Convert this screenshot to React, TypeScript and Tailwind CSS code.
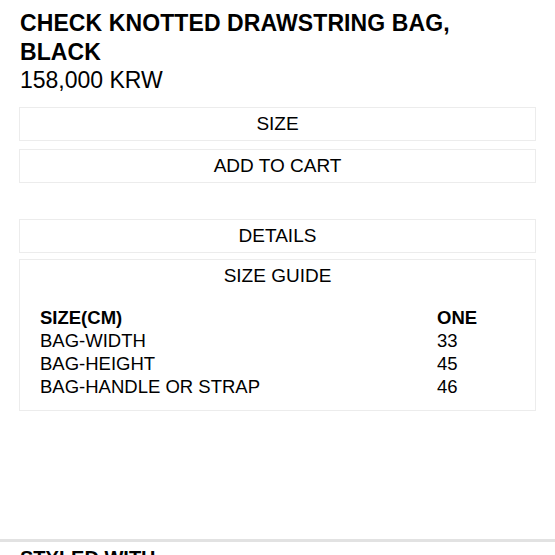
export default function App() {
  const rows = [
    { label: "BAG-WIDTH", value: "33" },
    { label: "BAG-HEIGHT", value: "45" },
    { label: "BAG-HANDLE OR STRAP", value: "46" },
  ];

  return (
    <div className="w-[555px] h-[555px] overflow-hidden bg-white text-black font-['Liberation_Sans',Arial,sans-serif]">
      {/* Title + price */}
      <div className="px-[20px] pt-[9px]">
        <h1 className="text-[23px] font-bold leading-[29px] tracking-[0.1px]">
          CHECK KNOTTED DRAWSTRING BAG,
          <br />
          BLACK
        </h1>
        <p className="text-[23px] leading-[27px]">158,000 KRW</p>
      </div>

      {/* Buttons */}
      <div className="mx-[19px] mt-[13px] flex flex-col gap-[8px]">
        <button className="h-[34px] border border-[#ececec] text-[19px] flex items-center justify-center">
          SIZE
        </button>
        <button className="h-[34px] border border-[#ececec] text-[19px] flex items-center justify-center">
          ADD TO CART
        </button>
      </div>

      {/* Details / size guide */}
      <div className="mx-[19px] mt-[36px] flex flex-col gap-[6px]">
        <div className="h-[34px] border border-[#ececec] text-[19px] flex items-center justify-center">
          DETAILS
        </div>
        <div className="border border-[#ececec]">
          <div className="h-[33px] text-[19px] flex items-center justify-center">
            SIZE GUIDE
          </div>
          <div className="pl-[20px] pt-[13px] pb-[12px] text-[18.5px] leading-[23px]">
            <div className="flex font-bold">
              <span className="flex-1">SIZE(CM)</span>
              <span className="w-[98px]">ONE</span>
            </div>
            {rows.map((r) => (
              <div key={r.label} className="flex">
                <span className="flex-1">{r.label}</span>
                <span className="w-[98px]">{r.value}</span>
              </div>
            ))}
          </div>
        </div>
      </div>

      {/* Styled with */}
      <div className="mt-[128px] border-t-[3px] border-[#e2e2e2] px-[20px] pt-[4px]">
        <h2 className="text-[20px] font-bold leading-[24px]">STYLED WITH</h2>
      </div>
    </div>
  );
}
